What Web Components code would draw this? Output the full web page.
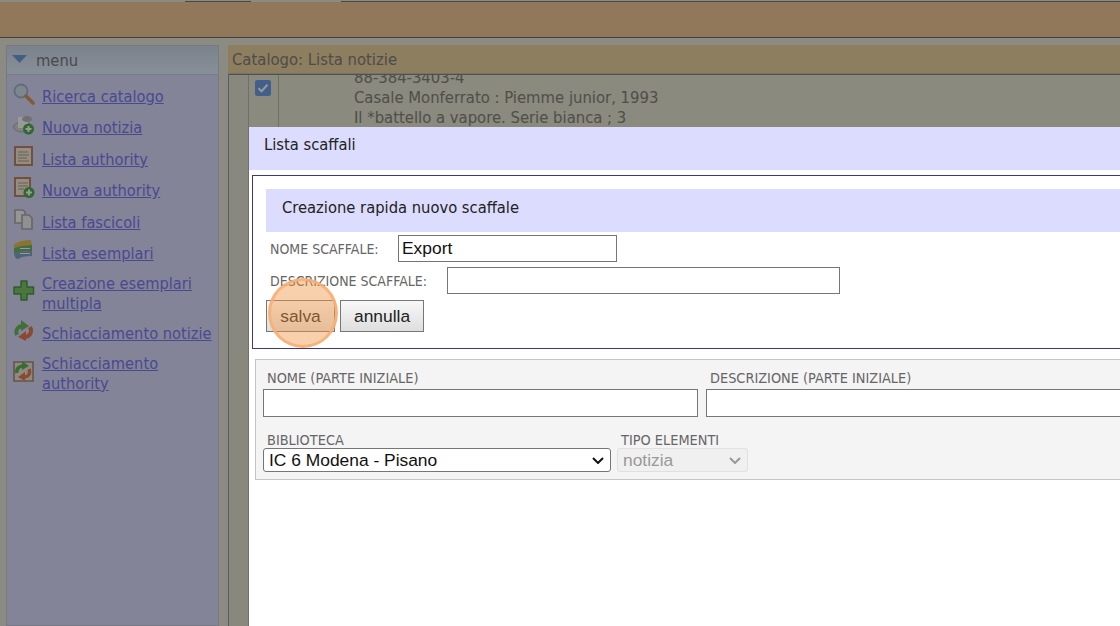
<!DOCTYPE html>
<html lang="it">
<head>
<meta charset="utf-8">
<title>Lista scaffali</title>
<style>
html, body { margin: 0; height: 100%; overflow: hidden; }
body { font-family: "DejaVu Sans", Tahoma, sans-serif; font-stretch: condensed; background: #e8e8da; }
</style>
</head>
<body>
<app-shell>
  <top-bar slot="top"></top-bar>
  <side-menu slot="side">
    <menu-item icon="search">Ricerca catalogo</menu-item>
    <menu-item icon="disk">Nuova notizia</menu-item>
    <menu-item icon="list">Lista authority</menu-item>
    <menu-item icon="listadd">Nuova authority</menu-item>
    <menu-item icon="pages">Lista fascicoli</menu-item>
    <menu-item icon="books">Lista esemplari</menu-item>
    <menu-item icon="plus">Creazione esemplari multipla</menu-item>
    <menu-item icon="merge">Schiacciamento notizie</menu-item>
    <menu-item icon="mergepage">Schiacciamento authority</menu-item>
  </side-menu>
  <catalog-panel slot="main" heading="Catalogo: Lista notizie">
    <div>88-384-3403-4</div>
    <div>Casale Monferrato : Piemme junior, 1993</div>
    <div>Il *battello a vapore. Serie bianca ; 3</div>
  </catalog-panel>
</app-shell>
<modal-dialog heading="Lista scaffali">
  <shelf-form heading="Creazione rapida nuovo scaffale"></shelf-form>
  <filter-box></filter-box>
</modal-dialog>
<click-marker></click-marker>

<script>
class AppShell extends HTMLElement {
  constructor() {
    super();
    this.attachShadow({ mode: "open" }).innerHTML = `<style>
:host { display: grid; grid-template-rows: 38px 1fr; height: 626px; overflow: hidden; }
.cols { display: grid; grid-template-columns: 213px 1fr; column-gap: 9px; padding: 7px 0 0 6px; min-height: 0; }
</style>
<slot name="top"></slot>
<div class="cols"><slot name="side"></slot><slot name="main"></slot></div>`;
  }
}

class TopBar extends HTMLElement {
  constructor() {
    super();
    this.attachShadow({ mode: "open" }).innerHTML = `<style>
:host { display: block; background: #f3c996; border-bottom: 1px solid #6e6e66; box-sizing: border-box; }
.tabs { display: flex; height: 2px; background: #e8e8da; }
.tabs i { display: block; border-bottom: 1px solid #777; }
.tabs .a { width: 185px; border: 0; }
.tabs .b { width: 66px; }
.tabs .c { width: 90px; border: 0; }
.tabs .d { flex: 1; }
</style>
<div class="tabs"><i class="a"></i><i class="b"></i><i class="c"></i><i class="d"></i></div>`;
  }
}

class SideMenu extends HTMLElement {
  constructor() {
    super();
    this.attachShadow({ mode: "open" }).innerHTML = `<style>
:host { display: block; background: #dcdcff; border: 1px solid #c5cad6; box-sizing: border-box; min-height: 0; }
header {
  display: flex; align-items: center; gap: 9px; height: 28px; padding: 0 0 0 5px;
  background: linear-gradient(#cdd9ea, #e2f0ff); border-bottom: 1px solid #c8cfe0;
  color: #7b7b7b; font-size: 16.4px;
}
header svg { width: 15px; height: 8px; margin-bottom: 2px; }
nav { display: flex; flex-direction: column; padding: 6px 0 0 6px; }
</style>
<header><svg viewBox="0 0 15 8"><path d="M0 0H15L7.5 8Z" fill="#6f9fd8"/></svg><span>menu</span></header>
<nav><slot></slot></nav>`;
  }
}

const ICONS = {
  search: `<circle cx="8" cy="8" r="6.5" fill="#cfe2f3" stroke="#a6b4c4" stroke-width="1.8"/><path d="M13 13l7 7" stroke="#d9975c" stroke-width="3.6" stroke-linecap="round"/>`,
  disk: `<ellipse cx="9.5" cy="13" rx="9" ry="5" fill="#d8d8d8" stroke="#aaa"/><path d="M5 3h10v11H5z" fill="#fff"/><ellipse cx="14" cy="5" rx="5" ry="3" fill="#bbb"/><circle cx="15.5" cy="15" r="5.5" fill="#4fb04f"/><path d="M15.5 12v6M12.5 15h6" stroke="#fff" stroke-width="2"/>`,
  list: `<path d="M2 1h17v18H2z" fill="#f7ecd9" stroke="#c08468" stroke-width="2"/><path d="M5 6h10M5 9h11M5 12h9M5 15h11" stroke="#b49a85" stroke-width="1.2"/>`,
  listadd: `<path d="M2 1h15v18H2z" fill="#f7ecd9" stroke="#c08468" stroke-width="2"/><path d="M5 6h10M5 9h10M5 12h6" stroke="#b49a85" stroke-width="1.2"/><circle cx="16" cy="15.5" r="5.5" fill="#4fb04f"/><path d="M16 12.5v6M13 15.5h6" stroke="#fff" stroke-width="2"/>`,
  pages: `<path d="M2 1h8l2 2v11H2z" fill="#fafafa" stroke="#aaa" stroke-width="1.6"/><path d="M9 6h7l3 3v11H9z" fill="#f0f0f0" stroke="#aaa" stroke-width="1.6"/>`,
  books: `<path d="M1 4Q8 0 18 0l1 5Q9 5 1 8z" fill="#eac24c"/><path d="M1 8q8-3 18-3v6q-10 0-18 3z" fill="#74b56f"/><path d="M1 14q8-3 18-3v5q-10 0-14 3-3 0-4-5z" fill="#7fa6c9"/><path d="M7 8.5h10M7 13.5h10" stroke="#fff" stroke-width="1.2"/>`,
  plus: `<path d="M8 1h6v6h6.500v7H14v6H8v-6H1V7h7z" fill="#7bc76a" stroke="#4d9a45" stroke-width="1.5" stroke-linejoin="round"/>`,
  merge: `<path d="M4 15C2 10 5 6 10 6" fill="none" stroke="#6dbb5c" stroke-width="4"/><path d="M8 0l8 6-8 5z" fill="#6dbb5c"/><path d="M17 7c3 6-1 10-6 10" fill="none" stroke="#e87a50" stroke-width="4"/><path d="M13 11l-8 6 8 4z" fill="#e87a50"/>`,
  mergepage: `<path d="M1 2h19v19H1z" fill="#efe6d8" stroke="#a98d7a" stroke-width="1.6"/><path d="M4 13C3 9 6 6 10 6" fill="none" stroke="#5fb256" stroke-width="3.4"/><path d="M9 1l7 5-7 4z" fill="#5fb256"/><path d="M16 9c2 5-1 8-5 8" fill="none" stroke="#e87a50" stroke-width="3.4"/><path d="M12 12l-7 5 7 4z" fill="#e87a50"/>`
};

class MenuItem extends HTMLElement {
  constructor() {
    super();
    const icon = ICONS[this.getAttribute("icon")] || "";
    this.attachShadow({ mode: "open" }).innerHTML = `<style>
:host { display: flex; align-items: center; gap: 7px; min-height: 31.5px; box-sizing: border-box; font-size: 16.3px; line-height: 20px; }
svg { flex: none; width: 22px; height: 22px; margin-bottom: 6px; filter: blur(.35px); }
a { padding: 4px 0; color: #7a7af0; text-decoration: underline; }
</style>
<svg viewBox="0 0 22 22" fill="none">${icon}</svg>
<a href="#"><slot></slot></a>`;
  }
}

class CatalogPanel extends HTMLElement {
  constructor() {
    super();
    this.attachShadow({ mode: "open" }).innerHTML = `<style>
:host { display: flex; flex-direction: column; min-height: 0; overflow: hidden; }
h1 { margin: 0; height: 28px; padding-left: 4px; background: #edd3a0; color: #808078; border-bottom: 1px solid #bfbfae; font: inherit; font-size: 16.5px; line-height: 30px; }
.body { flex: 1; display: grid; grid-template-columns: 20px 30px 1fr; border-top: 1px solid #888; border-left: 1px solid #999; overflow: hidden; background: #e6e6d2; }
.gutter { border-right: 1px solid #bdbdab; background: #e3e3d2; }
.check { border-right: 1px solid #bdbdab; padding: 5px 0 0 6px; }
.box { width: 16px; height: 16px; border-radius: 2px; background: #6f9fe8; }
.box svg { display: block; width: 16px; height: 16px; }
.text { margin-top: -7px; padding-left: 75px; color: #848479; font-size: 16.5px; line-height: 20px; }
</style>
<h1>${this.getAttribute("heading")}</h1>
<div class="body">
  <div class="gutter"></div>
  <div class="check"><div class="box"><svg viewBox="0 0 16 16"><path d="M3.5 8.2l3 3 6-6.500" fill="none" stroke="#fff" stroke-width="2"/></svg></div></div>
  <div class="text"><slot></slot></div>
</div>`;
  }
}

class ModalDialog extends HTMLElement {
  constructor() {
    super();
    this.attachShadow({ mode: "open" }).innerHTML = `<style>
:host { display: block; position: fixed; inset: 0; background: rgba(0, 0, 0, .4); font-size: 16.4px; }
.win { position: absolute; left: 249px; top: 127px; width: 1100px; bottom: 0; background: #fff; color: #222; }
h2 { margin: 0; height: 43px; padding-left: 15px; background: #dcdcfe; font: inherit; line-height: 36px; }
</style>
<div class="win"><h2>${this.getAttribute("heading")}</h2><slot></slot></div>`;
  }
}

class ShelfForm extends HTMLElement {
  constructor() {
    super();
    this.attachShadow({ mode: "open" }).innerHTML = `<style>
:host { display: block; margin: 5px 0 0 3px; padding: 13px; height: 174px; box-sizing: border-box; border: 1px solid #3a3a80; }
h3 { margin: 0 0 3px; height: 43px; padding-left: 16px; background: #dcdcfe; font: inherit; line-height: 38px; }
.row { display: flex; align-items: center; height: 27px; margin-bottom: 5px; padding-left: 4px; }
label { color: #666; font-size: 14px; }
input { box-sizing: border-box; height: 27px; margin: 0; padding: 0 3px; border: 1px solid #767676; font: 17.4px "Liberation Sans", Arial, sans-serif; color: #111; background: #fff; }
.name label { width: 128px; }
.name input { width: 219px; }
.desc label { width: 177px; }
.desc input { width: 393px; }
.btns { display: flex; gap: 5px; margin-top: 6px; }
button { height: 32px; margin: 0; padding: 0 13px; border: 1px solid #777; background: linear-gradient(#f8f8f8, #dedede); color: #222; font: 17.4px "Liberation Sans", Arial, sans-serif; }
button:first-child { width: 69px; }
button:last-child { width: 84px; }
</style>
<h3>${this.getAttribute("heading")}</h3>
<div class="row name"><label>NOME SCAFFALE:</label><input value="Export"></div>
<div class="row desc"><label>DESCRIZIONE SCAFFALE:</label><input></div>
<div class="btns"><button>salva</button><button>annulla</button></div>`;
  }
}

const chevron = c => `url("data:image/svg+xml,%3Csvg xmlns='http://www.w3.org/2000/svg' width='12' height='7'%3E%3Cpath d='M1 1l5 5 5-5' fill='none' stroke='%23${c}' stroke-width='2'/%3E%3C/svg%3E")`;

class FilterBox extends HTMLElement {
  constructor() {
    super();
    this.attachShadow({ mode: "open" }).innerHTML = `<style>
:host { display: block; margin: 10px 0 0 6px; width: 1000px; height: 121px; padding: 7px 7px 0; box-sizing: border-box; border: 1px solid #c4c4c4; background: #f4f4f4; }
.line { display: flex; gap: 8px; }
.line + .line { gap: 6px; margin-top: 13px; }
label { display: block; padding-left: 4px; height: 22px; line-height: 22px; color: #666; font-size: 14.4px; white-space: nowrap; }
.line + .line label { height: 18px; line-height: 20px; }
input { display: block; box-sizing: border-box; height: 28px; margin: 0; border: 1px solid #767676; background: #fff; }
.n input { width: 435px; }
.d input { width: 480px; }
select {
  display: block; box-sizing: border-box; height: 24px; margin: 0; padding: 0 0 0 5px; appearance: none;
  border-radius: 3px; border: 1px solid #767676; color: #111;
  font: 17.4px "Liberation Sans", Arial, sans-serif;
  background: #fff no-repeat right 6px center;
}
.b select { width: 348px; background-image: ${chevron("111")}; }
.t select { width: 131px; border-color: #e0e0e0; background-color: #f0f0f0; background-image: ${chevron("999")}; color: #999; opacity: 1; }
</style>
<div class="line">
  <div class="n"><label>NOME (PARTE INIZIALE)</label><input></div>
  <div class="d"><label>DESCRIZIONE (PARTE INIZIALE)</label><input></div>
</div>
<div class="line">
  <div class="b"><label>BIBLIOTECA</label><select><option>IC 6 Modena - Pisano</option></select></div>
  <div class="t"><label>TIPO ELEMENTI</label><select disabled><option>notizia</option></select></div>
</div>`;
  }
}

class ClickMarker extends HTMLElement {
  constructor() {
    super();
    this.attachShadow({ mode: "open" }).innerHTML = `<style>
:host { display: block; position: fixed; left: 268px; top: 278px; width: 70px; height: 70px; box-sizing: border-box; border: 3px solid rgba(247, 176, 118, .9); border-radius: 50%; background: rgba(240, 150, 70, .45); }
</style>`;
  }
}

customElements.define("app-shell", AppShell);
customElements.define("top-bar", TopBar);
customElements.define("side-menu", SideMenu);
customElements.define("menu-item", MenuItem);
customElements.define("catalog-panel", CatalogPanel);
customElements.define("modal-dialog", ModalDialog);
customElements.define("shelf-form", ShelfForm);
customElements.define("filter-box", FilterBox);
customElements.define("click-marker", ClickMarker);
</script>
</body>
</html>
